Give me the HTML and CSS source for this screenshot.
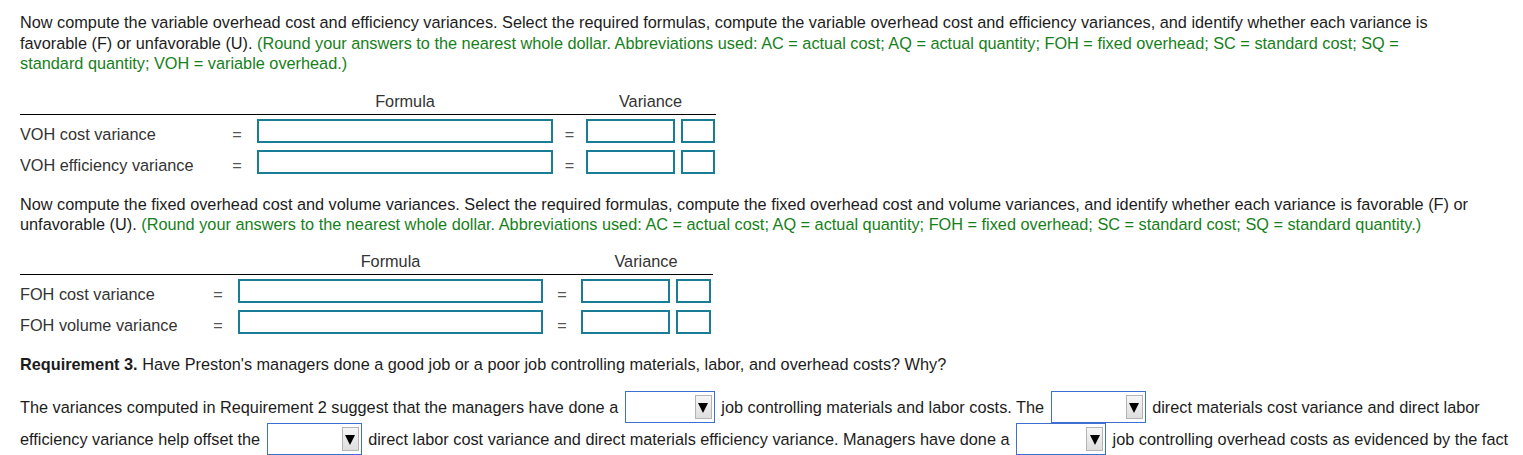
FILE: index.html
```html
<!DOCTYPE html>
<html lang="en">
<head>
<meta charset="utf-8">
<title>Overhead variances</title>
<link rel="stylesheet" href="styles.css">
</head>
<body>
<div class="page">
  <p class="q q-first">Now compute the variable overhead cost and efficiency variances. Select the required formulas, compute the variable overhead cost and efficiency variances, and identify whether each variance is favorable (F) or unfavorable (U). <span class="note">(Round your answers to the nearest whole dollar. Abbreviations used: AC = actual cost; AQ = actual quantity; FOH = fixed overhead; SC = standard cost; SQ = standard quantity; VOH = variable overhead.)</span></p>

  <div class="vt vt-1">
    <div class="vt-head">
      <span class="vt-h-formula">Formula</span>
      <span class="vt-h-var">Variance</span>
    </div>
    <div class="vt-row">
      <span class="vt-label">VOH cost variance</span>
      <span class="vt-eq">=</span>
      <input class="box box-formula" type="text">
      <span class="vt-eq">=</span>
      <span class="vt-var"><input class="box box-amt" type="text"><input class="box box-fu" type="text"></span>
    </div>
    <div class="vt-row">
      <span class="vt-label">VOH efficiency variance</span>
      <span class="vt-eq">=</span>
      <input class="box box-formula" type="text">
      <span class="vt-eq">=</span>
      <span class="vt-var"><input class="box box-amt" type="text"><input class="box box-fu" type="text"></span>
    </div>
  </div>

  <p class="q q-second">Now compute the fixed overhead cost and volume variances. Select the required formulas, compute the fixed overhead cost and volume variances, and identify whether each variance is favorable (F) or unfavorable (U). <span class="note">(Round your answers to the nearest whole dollar. Abbreviations used: AC = actual cost; AQ = actual quantity; FOH = fixed overhead; SC = standard cost; SQ = standard quantity.)</span></p>

  <div class="vt vt-2">
    <div class="vt-head">
      <span class="vt-h-formula">Formula</span>
      <span class="vt-h-var">Variance</span>
    </div>
    <div class="vt-row">
      <span class="vt-label">FOH cost variance</span>
      <span class="vt-eq">=</span>
      <input class="box box-formula" type="text">
      <span class="vt-eq">=</span>
      <span class="vt-var"><input class="box box-amt" type="text"><input class="box box-fu" type="text"></span>
    </div>
    <div class="vt-row">
      <span class="vt-label">FOH volume variance</span>
      <span class="vt-eq">=</span>
      <input class="box box-formula" type="text">
      <span class="vt-eq">=</span>
      <span class="vt-var"><input class="box box-amt" type="text"><input class="box box-fu" type="text"></span>
    </div>
  </div>

  <p class="q q-req"><strong>Requirement 3.</strong> Have Preston's managers done a good job or a poor job controlling materials, labor, and overhead costs? Why?</p>

  <p class="answer">The variances computed in Requirement 2 suggest that the managers have done a <span class="dd dd-a"><span class="dd-btn"><svg viewBox="0 0 10 11" width="10" height="11"><polygon points="0,1 10,1 5,11" fill="#000"/></svg></span></span> job controlling materials and labor costs. The <span class="dd dd-b"><span class="dd-btn"><svg viewBox="0 0 10 11" width="10" height="11"><polygon points="0,1 10,1 5,11" fill="#000"/></svg></span></span> direct materials cost variance and direct labor efficiency variance help offset the <span class="dd dd-b"><span class="dd-btn"><svg viewBox="0 0 10 11" width="10" height="11"><polygon points="0,1 10,1 5,11" fill="#000"/></svg></span></span> direct labor cost variance and direct materials efficiency variance. Managers have done a <span class="dd dd-a"><span class="dd-btn"><svg viewBox="0 0 10 11" width="10" height="11"><polygon points="0,1 10,1 5,11" fill="#000"/></svg></span></span> job controlling overhead costs as evidenced by the fact</p>
</div>
</body>
</html>
```

FILE: styles.css
```css
html, body {
  margin: 0;
  background: #fff;
}

body {
  font-family: "Liberation Sans", Arial, sans-serif;
  font-size: 16.3px;
  color: #1c1c1c;
}

.page {
  padding: 12px 6px 0 20px;
}

.q {
  margin: 0;
  line-height: 20.5px;
}

.q-first {
  max-width: 1420px;
}

.q-second {
  margin-top: 20px;
  max-width: 1470px;
}

.q-req {
  margin-top: 20px;
}

.note {
  color: #16801a;
}

/* variance tables */
.vt {
  color: #333;
}

.vt-1 {
  margin-top: 19px;
  width: 696px;
  --cols: 197px 20px 296px 13px 129px;
}

.vt-2 {
  margin-top: 18px;
  width: 693px;
  --cols: 178px 20px 305px 18px 130px;
}

.vt-head,
.vt-row {
  display: grid;
  grid-template-columns: var(--cols);
  column-gap: 10px;
}

.vt-head {
  line-height: 17px;
  padding-bottom: 4px;
  border-bottom: 1px solid #000;
}

.vt-h-formula {
  grid-column: 3;
  text-align: center;
}

.vt-h-var {
  grid-column: 5;
  text-align: center;
}

.vt-row {
  height: 24px;
  align-items: end;
  margin-top: 7px;
}

.vt-head + .vt-row {
  margin-top: 4px;
}

.vt-label {
  line-height: 17px;
  white-space: nowrap;
}

.vt-eq {
  line-height: 17px;
  text-align: center;
  color: #555;
}

.vt-var {
  display: flex;
  gap: 6px;
  height: 24px;
}

.box {
  box-sizing: border-box;
  height: 24px;
  margin: 0;
  padding: 0 4px;
  border: 2px solid #1a7d96;
  border-radius: 0;
  background: #fff;
  font: inherit;
  outline: none;
}

.box-formula {
  width: 100%;
}

.box-amt {
  width: 89px;
}

.box-fu {
  flex: 1;
  min-width: 0;
}

/* answer paragraph with dropdowns */
.answer {
  margin: 17px 0 0;
  line-height: 32px;
}

.dd {
  display: inline-flex;
  justify-content: flex-end;
  align-items: center;
  box-sizing: border-box;
  height: 32px;
  padding-right: 2px;
  vertical-align: top;
  margin: 0 2px;
  border: 1px solid #3d6fd2;
  background: #fff;
}

.dd-a {
  width: 90px;
}

.dd-b {
  width: 95px;
}

.dd-btn {
  display: flex;
  align-items: center;
  justify-content: center;
  box-sizing: border-box;
  width: 17px;
  height: 24px;
  border: 1px solid #b4b4b4;
  background: linear-gradient(#f6f6f6, #dedede);
}

.dd-btn svg {
  display: block;
}
```
